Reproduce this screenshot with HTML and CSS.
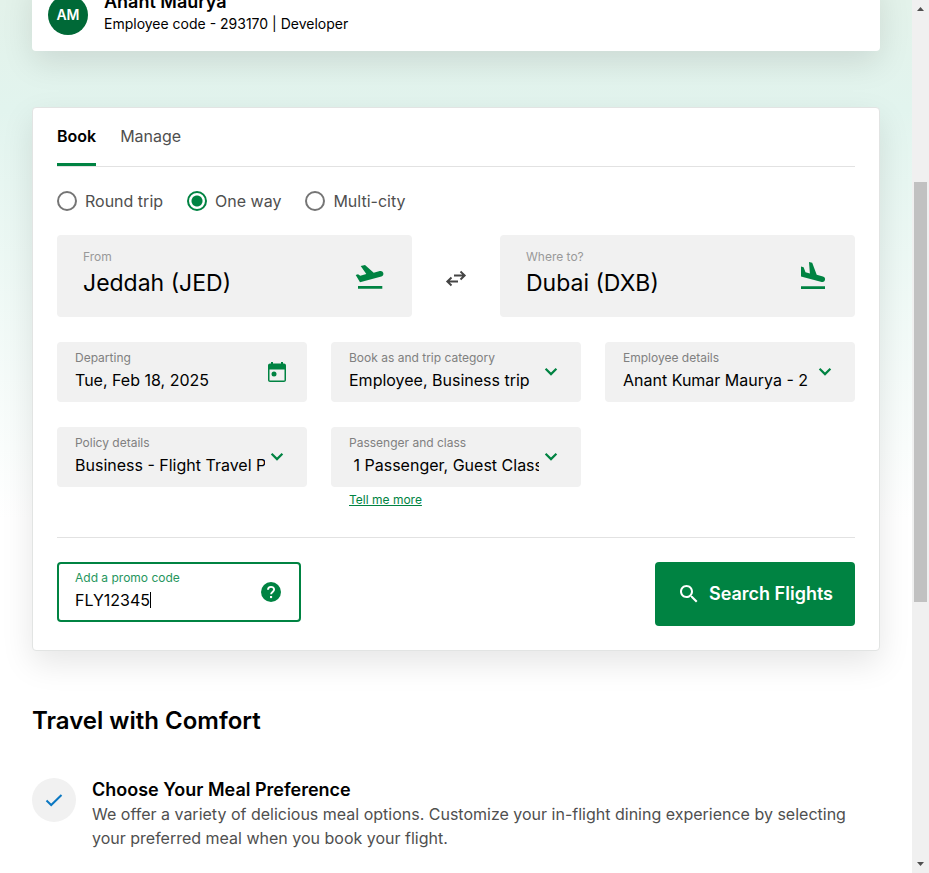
FILE: index.html
```html
<!DOCTYPE html>
<html lang="en">
<head>
<meta charset="utf-8">
<title>Book flights</title>
<link rel="stylesheet" href="styles.css">
</head>
<body>
<svg class="sprite" aria-hidden="true">
  <symbol id="chevron" viewBox="0 0 24 24"><path d="M6.6 8.700 12 14.100l5.400-5.400" fill="none" stroke="currentColor" stroke-width="2.200"/></symbol>
</svg>
<div class="window">
  <main class="page">
    <section class="profile">
      <span class="avatar">AM</span>
      <div>
        <h2 class="profile-name">Anant Maurya</h2>
        <p class="profile-meta">Employee code - 293170 | Developer</p>
      </div>
    </section>

    <form class="booking">
      <nav class="tabs">
        <a class="tab tab-active" href="#book">Book</a>
        <a class="tab" href="#manage">Manage</a>
      </nav>

      <div class="trip-types">
        <label class="radio"><input type="radio" name="trip">Round trip</label>
        <label class="radio"><input type="radio" name="trip" checked>One way</label>
        <label class="radio"><input type="radio" name="trip">Multi-city</label>
      </div>

      <div class="route">
        <div class="field field-large">
          <div class="field-text">
            <label for="from">From</label>
            <input id="from" type="text" value="Jeddah (JED)">
          </div>
          <svg class="icon-large" viewBox="0 0 30 30"><path d="M2 25h24.300v2.700H2zM-.3 14 2 13.300l2.300 1.500 6-1.700L4.700 5 9 4l8.700 7.800 6.100-1.700c1.700-.4 3 .4 3.500 1.900.4 1.700-.4 3.100-1.900 3.600L4 21.300z" fill="currentColor"/></svg>
        </div>
        <button class="swap" type="button" aria-label="Swap airports">
          <svg viewBox="0 0 24 24"><path d="M10 9.500h10M16.500 5.500l4.200 4-4.200 4M14 15.500H3.500M7.500 11.500l-4.200 4 4.200 4" fill="none" stroke="currentColor" stroke-width="1.900"/></svg>
        </button>
        <div class="field field-large">
          <div class="field-text">
            <label for="to">Where to?</label>
            <input id="to" type="text" value="Dubai (DXB)">
          </div>
          <svg class="icon-large" viewBox="0 0 30 30"><path d="M2 25.200h24v2.700H2zM2 5.500l2.600.8 1.900 5 4.400 1.200L10 1l3.200.8 4.500 12 6.200 1.700c1.700.5 2.500 1.800 2.100 3.300-.4 1.700-1.700 2.500-3.300 2.100L2 15.400z" fill="currentColor"/></svg>
        </div>
      </div>

      <div class="details">
        <div class="field">
          <div class="field-text">
            <label for="date">Departing</label>
            <input id="date" type="text" value="Tue, Feb 18, 2025">
          </div>
          <svg class="icon" viewBox="0 0 24 24"><path d="M19 3.500h-1V2h-2v1.500H8V2H6v1.500H5c-1.100 0-2 .9-2 2V20c0 1.100.9 2 2 2h14c1.100 0 2-.9 2-2V5.500c0-1.100-.9-2-2-2zM19.500 20.500h-15V9.500h15z" fill="currentColor"/><circle cx="9" cy="14" r="2.500" fill="currentColor"/></svg>
        </div>
        <div class="field">
          <div class="field-text">
            <label for="category">Book as and trip category</label>
            <select id="category"><option>Employee, Business trip</option></select>
          </div>
          <svg class="icon"><use href="#chevron"/></svg>
        </div>
        <div class="field">
          <div class="field-text">
            <label for="employee">Employee details</label>
            <select id="employee"><option>Anant Kumar Maurya - 2</option></select>
          </div>
          <svg class="icon"><use href="#chevron"/></svg>
        </div>
        <div class="field">
          <div class="field-text">
            <label for="policy">Policy details</label>
            <select id="policy"><option>Business - Flight Travel P</option></select>
          </div>
          <svg class="icon"><use href="#chevron"/></svg>
        </div>
        <div>
          <div class="field">
            <div class="field-text">
              <label for="passengers">Passenger and class</label>
              <select id="passengers"><option>&nbsp;1 Passenger, Guest Class</option></select>
            </div>
            <svg class="icon"><use href="#chevron"/></svg>
          </div>
          <a class="more" href="#more">Tell me more</a>
        </div>
      </div>

      <div class="actions">
        <div class="field field-promo">
          <div class="field-text">
            <label for="promo">Add a promo code</label>
            <div class="promo-value"><input id="promo" type="text" value="FLY12345"><span class="caret"></span></div>
          </div>
          <svg class="icon" viewBox="0 0 24 24"><circle cx="12" cy="12" r="10" fill="currentColor"/><path d="M9 9.800c0-4 6.100-3.800 6.100-.3 0 2.300-3 2.500-3 4.700" fill="none" stroke="#fff" stroke-width="1.900"/><path d="M11 16h2.100v2.100H11z" fill="#fff"/></svg>
        </div>
        <button class="search" type="submit">
          <svg class="icon" viewBox="0 0 24 24"><path d="M15.500 14h-.79l-.28-.27C15.410 12.590 16 11.110 16 9.500 16 5.910 13.090 3 9.500 3S3 5.910 3 9.500 5.910 16 9.500 16c1.610 0 3.090-.59 4.230-1.570l.27.28v.79l5 4.990L20.490 19l-4.990-5zm-6 0C7.010 14 5 11.990 5 9.500S7.010 5 9.500 5 14 7.010 14 9.500 11.990 14 9.500 14z" fill="currentColor"/></svg>
          <span>Search Flights</span>
        </button>
      </div>
    </form>

    <section class="comfort">
      <h1>Travel with Comfort</h1>
      <article class="benefit">
        <span class="benefit-icon"><svg viewBox="0 0 24 24"><path d="M4.500 12.500l4.700 4.500L19.500 7" fill="none" stroke="currentColor" stroke-width="2"/></svg></span>
        <div>
          <h3>Choose Your Meal Preference</h3>
          <p>We offer a variety of delicious meal options. Customize your in-flight dining experience by selecting your preferred meal when you book your flight.</p>
        </div>
      </article>
    </section>
  </main>
  <div class="scrollbar" aria-hidden="true">
    <svg viewBox="0 0 17 17"><path d="M5 11h7L8.500 7z" fill="#505050"/></svg>
    <div class="track"><div class="thumb"></div></div>
    <svg viewBox="0 0 17 17"><path d="M5 6h7l-3.500 4z" fill="#505050"/></svg>
  </div>
</div>
</body>
</html>
```
FILE: styles.css
```css
* { box-sizing: border-box; }
body, h1, h2, h3, p { margin: 0; }
body {
  font-family: Inter, "Liberation Sans", sans-serif;
  font-size: 16px;
  line-height: 24px;
  color: #000;
}
input, select, button { font: inherit; color: inherit; }
.sprite { display: none; }
.window { display: flex; height: 100vh; overflow: hidden; }
.page {
  flex: 1;
  min-width: 0;
  padding: 0 32px;
  overflow: hidden;
  background: linear-gradient(#e3f2ea 0, #e2f4ee 110px, #fff 520px);
}

.profile {
  display: flex;
  align-items: flex-end;
  gap: 16px;
  margin-top: -21px;
  padding: 11px 16px 16px;
  background: #fff;
  border-radius: 4px;
  box-shadow: 0 12px 32px rgba(0, 0, 0, 0.1);
}
.profile-meta { padding-bottom: 1px; }
.avatar {
  display: grid;
  place-items: center;
  width: 40px;
  height: 40px;
  border-radius: 50%;
  background: #006937;
  color: #fff;
  font-size: 14px;
  font-weight: 600;
}
.profile-name { font-size: 18px; font-weight: 600; line-height: 24px; }
.profile-meta { font-size: 14px; line-height: 20px; }

.booking {
  margin-top: 56px;
  padding: 0 24px 24px;
  background: #fff;
  border: 1px solid #e2e4e3;
  border-radius: 4px;
  box-shadow: 0 12px 32px rgba(0, 0, 0, 0.1);
}
.tabs { display: flex; gap: 24px; border-bottom: 1px solid #e2e2e2; }
.tab {
  padding: 16px 0 15px;
  border-bottom: 3px solid transparent;
  color: #4f4f4f;
  text-decoration: none;
}
.tab-active { color: #000; font-weight: 600; border-color: #008342; }

.trip-types { display: flex; gap: 24px; margin-top: 22px; color: #4f4f4f; }
.radio { display: flex; align-items: center; gap: 8px; }
.radio input {
  appearance: none;
  width: 20px;
  height: 20px;
  margin: 0;
  border: 2px solid #757575;
  border-radius: 50%;
}
.radio input:checked {
  border-color: #008342;
  background: radial-gradient(circle, #008342 5px, #fff 6px);
}

.field {
  display: flex;
  align-items: center;
  height: 60px;
  padding: 0 18px;
  background: #f1f1f1;
  border-radius: 4px;
}
.field-text { flex: 1; min-width: 0; padding-bottom: 2px; }
.field label {
  display: block;
  margin-bottom: 2px;
  color: #808080;
  font-size: 12px;
  line-height: 16px;
}
.field input, .field select {
  appearance: none;
  display: block;
  width: 100%;
  height: 24px;
  padding: 0;
  border: 0;
  outline: 0;
  background: none;
}
.icon { flex: none; width: 24px; height: 24px; color: #008342; }

.route { display: grid; grid-template-columns: 1fr 88px 1fr; margin-top: 22px; }
.field-large { height: 82px; padding: 0 26px; }
.field-large .field-text { padding-bottom: 4px; }
.field-large label { color: #999; }
.field-large input { height: 32px; font-size: 23px; }
.icon-large { flex: none; width: 30px; height: 30px; overflow: visible; color: #008342; }
.swap { display: grid; place-items: center; padding: 4px 0 0; border: 0; background: none; color: #444; }
.swap svg { width: 24px; height: 24px; }

.details {
  display: grid;
  grid-template-columns: repeat(3, 1fr);
  gap: 25px 24px;
  margin-top: 25px;
}
.more {
  display: block;
  width: fit-content;
  margin: 5px 18px 0;
  color: #008342;
  font-size: 12px;
  line-height: 16px;
}

.actions {
  display: flex;
  justify-content: space-between;
  align-items: flex-start;
  margin-top: 29px;
  padding-top: 24px;
  border-top: 1px solid #e2e2e2;
}
.field-promo { width: 244px; padding: 0 16px; background: #fff; border: 2px solid #008342; }
.field-promo label { color: #26965d; }
.promo-value { display: flex; align-items: center; }
.field-promo input { width: auto; field-sizing: content; caret-color: transparent; }
.caret { width: 1px; height: 16px; background: #000; }
.search {
  display: flex;
  align-items: center;
  gap: 8px;
  height: 64px;
  padding: 0 22px;
  border: 0;
  border-radius: 4px;
  background: #008342;
  color: #fff;
  font-size: 18px;
  font-weight: 600;
}
.search .icon { color: #fff; }

.comfort { margin-top: 54px; }
.comfort h1 { font-size: 24px; font-weight: 600; line-height: 32px; }
.benefit { display: flex; gap: 16px; margin-top: 41px; }
.benefit-icon {
  flex: none;
  display: grid;
  place-items: center;
  width: 44px;
  height: 44px;
  border-radius: 50%;
  background: #f1f1f1;
  color: #0b78c2;
}
.benefit-icon svg { width: 24px; height: 24px; }
.benefit h3 { font-size: 18px; font-weight: 600; line-height: 24px; }
.benefit p { color: #4f4f4f; }

.scrollbar { display: flex; flex-direction: column; width: 17px; background: #f0f0f0; }
.scrollbar svg { width: 17px; height: 17px; }
.track { display: flow-root; flex: 1; padding: 0 2px; }
.thumb { height: 420px; margin-top: 165px; background: #c1c1c1; }
```
